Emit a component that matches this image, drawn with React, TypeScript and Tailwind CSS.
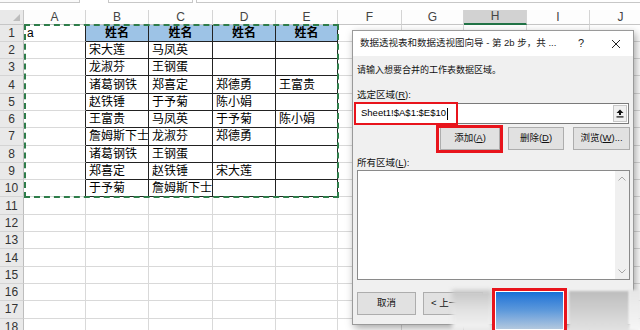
import React from 'react';
import clsx from 'clsx';

const colW = ['w-[62px]', 'w-[63px]', 'w-[64px]', 'w-[63px]', 'w-[62px]', 'w-[64px]', 'w-[62px]', 'w-[63px]', 'w-[63px]', 'w-[62px]'];
const letters = ['A', 'B', 'C', 'D', 'E', 'F', 'G', 'H', 'I', 'J'];

const data: string[][] = [
  ['a', '姓名', '姓名', '姓名', '姓名'],
  ['', '宋大莲', '马凤英', '', ''],
  ['', '龙淑芬', '王钢蛋', '', ''],
  ['', '诸葛钢铁', '郑喜定', '郑德勇', '王富贵'],
  ['', '赵铁锤', '于予菊', '陈小娟', ''],
  ['', '王富贵', '马凤英', '于予菊', '陈小娟'],
  ['', '詹姆斯下士', '龙淑芬', '郑德勇', ''],
  ['', '诸葛钢铁', '王钢蛋', '', ''],
  ['', '郑喜定', '赵铁锤', '宋大莲', ''],
  ['', '于予菊', '詹姆斯下士', '', ''],
];

const rows = Array.from({ length: 18 }, (_, i) => i + 1);

const Btn = ({ children, className }: { children: React.ReactNode; className?: string }) => (
  <div className={clsx('h-[23px] shrink-0 bg-[#e1e1e1] border border-[#adadad] flex items-center justify-center text-[9.5px] text-[#111]', className)}>
    {children}
  </div>
);

const Sheet = () => (
  <div className="flex flex-col">
    {/* formula bar remnants */}
    <div className="h-[10px] flex items-start gap-[3px]">
      <div className="w-[80px] h-[3px] border-b border-r border-[#c8c8c8] bg-[#fafafa]" />
      <div className="w-[22px]" />
      <div className="w-[85px] h-[3px] border-b border-x border-[#c8c8c8]" />
      <div className="flex-1 h-[3px] border-b border-l border-[#c8c8c8]" />
    </div>
    {/* column headers */}
    <div className="flex h-[14.5px] text-[12px] text-[#444]">
      <div className="w-[24px] shrink-0 bg-[#e9e9e9] border-r border-b border-[#c6c6c6] relative">
        <div className="absolute right-[3px] bottom-[3px] w-0 h-0 border-l-[7px] border-l-transparent border-b-[7px] border-b-[#bdbdbd]" />
      </div>
      {letters.map((l, c) => (
        <div
          key={l}
          className={clsx(
            colW[c],
            'shrink-0 border-r border-[#d4d4d4] flex items-center justify-center leading-none',
            c === 7 ? 'bg-[#d2d2d2] border-b-2 border-b-[#217346]' : 'bg-[#fdfdfd] border-b border-b-[#c6c6c6]'
          )}
        >
          {l}
        </div>
      ))}
    </div>
    {rows.map((r) => (
      <div key={r} className="flex h-[17.3px]">
        <div className="w-[24px] shrink-0 bg-[#e9e9e9] border-r border-r-[#bdbdbd] border-b border-b-[#d4d4d4] flex items-center justify-center text-[12px] text-[#333] leading-none">
          {r}
        </div>
        {letters.map((l, c) => {
          const inTable = r <= 10 && c >= 1 && c <= 4;
          const text = r <= 10 && c <= 4 ? data[r - 1][c] : '';
          const head = r === 1 && inTable;
          return (
            <div
              key={l}
              className={clsx(
                colW[c],
                'shrink-0 border-r border-b flex items-center leading-none text-[12px] text-black overflow-hidden whitespace-nowrap',
                inTable || (c === 0 && r <= 10) ? 'border-r-[#222]' : 'border-r-[#d9d9d9]',
                inTable ? 'border-b-[#222]' : 'border-b-[#d9d9d9]',
                head ? 'bg-[#9dc3e6] justify-center font-bold' : 'bg-white pl-[3px]'
              )}
            >
              {text}
            </div>
          );
        })}
      </div>
    ))}
  </div>
);

const Dialog = () => (
  <div className="absolute left-[352px] top-[30px] w-[282px] h-[295px] border border-[#9a9a9a] bg-[#f0f0f0] shadow-[2px_3px_8px_rgba(0,0,0,0.35)] flex flex-col">
    <div className="h-[25px] bg-white flex items-center pl-[7px] pr-[7px] text-[9.5px] text-[#222] shrink-0">
      <span>数据透视表和数据透视图向导 - 第 2b 步，共 ...</span>
      <span className="ml-auto w-[20px] text-center text-[11px]">?</span>
      <span className="ml-[15px] w-[20px] flex justify-center">
        <svg width="10" height="10" viewBox="0 0 10 10"><path d="M1 1 L9 9 M9 1 L1 9" stroke="#222" strokeWidth="1" /></svg>
      </span>
    </div>
    <div className="flex flex-col px-[3px] text-[9.5px] text-[#111]">
      <div className="h-[11px] leading-[11px] mt-[9px] pl-[1px] text-[9px]">请输入想要合并的工作表数据区域。</div>
      <div className="h-[11px] leading-[11px] mt-[13px] pl-[1px]">
        选定区域(<span className="underline">R</span>):
      </div>
      <div className="relative mt-[3px] ml-[-1px] h-[21px] w-[274px] bg-white border border-[#7a7a7a] flex items-center">
        <span className="pl-[5px] text-[9.5px] text-black">Sheet1!$A$1:$E$10</span>
        <span className="w-px h-[12px] bg-black ml-[1px]" />
        <div className="ml-auto h-[17px] w-[14px] mr-[1px] bg-[#f0f0f0] border border-[#c8c8c8] flex items-center justify-center">
          <svg width="8" height="9" viewBox="0 0 8 9">
            <path d="M4 0.5 L7.5 4 L5 4 L5 6 L3 6 L3 4 L0.5 4 Z" fill="#111" />
            <rect x="0.5" y="7.3" width="7" height="1.2" fill="#111" />
          </svg>
        </div>
        <div className="absolute left-[-2px] top-[-2px] w-[104px] h-[23px] border-2 border-[#e8141c]" />
      </div>
      <div className="flex mt-[3px] h-[23px]">
        <div className="relative ml-[84px]">
          <Btn className="w-[60px]">添加(<span className="underline">A</span>)</Btn>
          <div className="absolute left-[-4px] top-[-2px] w-[67px] h-[28px] border-[3px] border-[#e8141c]" />
        </div>
        <Btn className="w-[56px] ml-[8px]">删除(<span className="underline">D</span>)</Btn>
        <Btn className="w-[57px] ml-[9px]">浏览(<span className="underline">W</span>)...</Btn>
      </div>
      <div className="h-[11px] leading-[11px] mt-[7px] pl-[1px]">
        所有区域(<span className="underline">L</span>):
      </div>
      <div className="mt-[2px] ml-[1px] w-[273px] h-[110px] bg-white border border-[#8a8a8a] flex justify-end">
        <div className="w-[14px] bg-[#f0f0f0] flex flex-col items-center justify-between py-[5px]">
          <svg width="8" height="5" viewBox="0 0 8 5"><path d="M0.5 4.5 L4 1 L7.5 4.5" stroke="#a6a6a6" fill="none" /></svg>
          <svg width="8" height="5" viewBox="0 0 8 5"><path d="M0.5 0.5 L4 4 L7.5 0.5" stroke="#a6a6a6" fill="none" /></svg>
        </div>
      </div>
      <div className="flex mt-[12px] ml-[1px]">
        <Btn className="w-[59px] h-[22px]">取消</Btn>
        <Btn className="w-[60px] h-[22px] ml-[7px] justify-start pl-[7px]">&lt; 上一</Btn>
      </div>
    </div>
  </div>
);

export default function App() {
  return (
    <div className="relative w-[640px] h-[330px] overflow-hidden bg-white font-['Liberation_Sans','Noto_Sans_CJK_SC',sans-serif]">
      <Sheet />
      {/* copy marquee */}
      <div className="absolute left-[24px] top-[24px] w-[315px] h-[174px] border-2 border-dashed border-[#2e7d4a]" />
      <Dialog />
      {/* blurred footer area */}
      <div className="absolute left-[452px] top-[290px] w-[40px] h-[40px] bg-gradient-to-b from-[#c4c4c4] via-[#e2e2e2] to-[#f4f4f4] blur-[2px]" />
      <div className="absolute left-[492px] top-[288px] w-[75px] h-[45px] border-[3px] border-[#e8141c] bg-white p-[1px]">
        <div className="w-full h-full bg-gradient-to-b from-[#1470d6] via-[#5d99db] to-[#b3c8de]" />
      </div>
      <div className="absolute left-[569px] top-[291px] w-[60px] h-[40px] bg-gradient-to-b from-[#bdbdbd] to-[#e3e3e3] blur-[1px]" />
      <div className="absolute left-[629px] top-[290px] w-[11px] h-[40px] bg-gradient-to-b from-[#e6e6e6] to-[#f6f6f6] blur-[1px]" />
    </div>
  );
}
